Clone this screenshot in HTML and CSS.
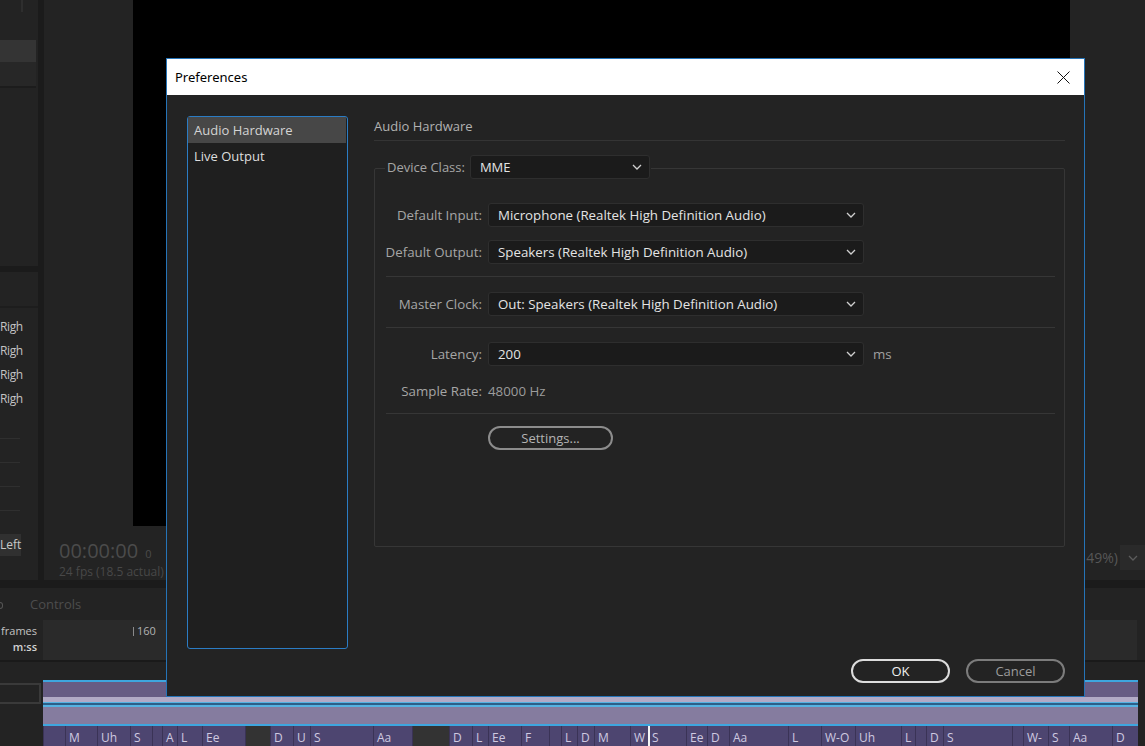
FILE: index.html
```html
<!DOCTYPE html>
<html lang="en">
<head>
<meta charset="UTF-8" />
<title>Preferences</title>
<link rel="stylesheet" href="styles.css">
</head>
<body>
<div class="app">
    <div class="top">
        <div class="side">
            <div class="side-upper">
                <div class="side-tick"></div>
                <div class="side-band"></div>
                <div class="side-row-dim"></div>
            </div>
            <div class="side-lower">
                <div class="side-head"></div>
                <div class="side-item">Righ</div>
                <div class="side-item">Righ</div>
                <div class="side-item">Righ</div>
                <div class="side-item">Righ</div>
                <div class="side-rules">
                    <div class="side-rule"></div>
                    <div class="side-rule"></div>
                    <div class="side-rule"></div>
                    <div class="side-rule"></div>
                </div>
                <div class="side-btn">Left</div>
            </div>
        </div>
        <div class="monitor">
            <div class="monitor-view"><div class="video"></div></div>
            <div class="monitor-foot">
                <div class="timecode-block">
                    <div class="timecode">00:00:00 <span class="tc-small">0</span></div>
                    <div class="fps">24 fps (18.5 actual)</div>
                </div>
                <div class="zoom-block">
                    <span class="zoom-val">49%)</span>
                    <span class="zoom-drop">
                        <svg width="10" height="6" viewBox="0 0 10 6"><path d="M1 1l4 4 4-4" fill="none" stroke="#5c5c5c" stroke-width="1.3"/></svg>
                    </span>
                </div>
            </div>
        </div>
    </div>

    <div class="bottom">
        <div class="tabs">
            <span class="tab-cut"></span>
            <span class="tab">Controls</span>
        </div>
        <div class="ruler-row">
            <div class="units">
                <div>frames</div>
                <div class="units-strong">m:ss</div>
            </div>
            <div class="ruler"><span class="tick"></span><span class="tick-label">160</span></div>
        </div>
        <div class="ruler-gap"></div>
        <div class="timeline">
            <div class="track-head"><div class="track-box"></div></div>
            <div class="track">
                <div class="t-line"></div>
                <div class="t-a"></div>
                <div class="t-b"></div>
                <div class="t-line thin"></div>
                <div class="t-dark"></div>
                <div class="t-line thin"></div>
                <div class="t-c"></div>
                <div class="t-line"></div>
                <div class="phonemes">
                    <div class="ph" style="width:22px"></div>
                    <div class="ph" style="width:32px">M</div>
                    <div class="ph" style="width:33px">Uh</div>
                    <div class="ph" style="width:22px">S</div>
                    <div class="ph" style="width:10px"></div>
                    <div class="ph" style="width:15px">A</div>
                    <div class="ph" style="width:25px">L</div>
                    <div class="ph" style="width:43px">Ee</div>
                    <div class="ph gap" style="width:25px"></div>
                    <div class="ph" style="width:23px">D</div>
                    <div class="ph" style="width:17px">U</div>
                    <div class="ph" style="width:63px">S</div>
                    <div class="ph" style="width:39px">Aa</div>
                    <div class="ph gap" style="width:37px"></div>
                    <div class="ph" style="width:23px">D</div>
                    <div class="ph" style="width:16px">L</div>
                    <div class="ph" style="width:33px">Ee</div>
                    <div class="ph" style="width:28px">F</div>
                    <div class="ph" style="width:12px"></div>
                    <div class="ph" style="width:16px">L</div>
                    <div class="ph" style="width:17px">D</div>
                    <div class="ph" style="width:36px">M</div>
                    <div class="ph" style="width:18px">W</div>
                    <div class="playhead"></div>
                    <div class="ph nobar" style="width:36px">S</div>
                    <div class="ph" style="width:21px">Ee</div>
                    <div class="ph" style="width:22px">D</div>
                    <div class="ph" style="width:59px">Aa</div>
                    <div class="ph" style="width:33px">L</div>
                    <div class="ph" style="width:34px">W-O</div>
                    <div class="ph" style="width:46px">Uh</div>
                    <div class="ph" style="width:14px">L</div>
                    <div class="ph" style="width:11px"></div>
                    <div class="ph" style="width:17px">D</div>
                    <div class="ph" style="width:69px">S</div>
                    <div class="ph" style="width:11px"></div>
                    <div class="ph" style="width:25px">W-</div>
                    <div class="ph" style="width:21px">S</div>
                    <div class="ph" style="width:43px">Aa</div>
                    <div class="ph" style="width:26px">D</div>
                </div>
            </div>
        </div>
    </div>
</div>

<!-- modal preferences dialog -->
<div class="dialog">
    <div class="titlebar">
        <span>Preferences</span>
        <svg class="close" width="13" height="13" viewBox="0 0 13 13"><path d="M0.5 0.5l12 12M12.5 0.5l-12 12" stroke="#111" stroke-width="1"/></svg>
    </div>
    <div class="dialog-body">
        <div class="main">
            <div class="cat-list">
                <div class="cat-item selected">Audio Hardware</div>
                <div class="cat-item">Live Output</div>
            </div>
            <div class="panel">
                <div class="panel-title">Audio Hardware</div>
                <div class="group">
                    <div class="group-head">
                        <span class="label">Device Class:</span>
                        <div class="select narrow">
                            <span>MME</span>
                            <svg width="10" height="6" viewBox="0 0 10 6"><path d="M1 1l4 4 4-4" fill="none" stroke="#d0d0d0" stroke-width="1.3"/></svg>
                        </div>
                    </div>

                    <div class="row first">
                        <span class="row-label">Default Input:</span>
                        <div class="select">
                            <span>Microphone (Realtek High Definition Audio)</span>
                            <svg width="10" height="6" viewBox="0 0 10 6"><path d="M1 1l4 4 4-4" fill="none" stroke="#d0d0d0" stroke-width="1.3"/></svg>
                        </div>
                    </div>
                    <div class="row near">
                        <span class="row-label">Default Output:</span>
                        <div class="select">
                            <span>Speakers (Realtek High Definition Audio)</span>
                            <svg width="10" height="6" viewBox="0 0 10 6"><path d="M1 1l4 4 4-4" fill="none" stroke="#d0d0d0" stroke-width="1.3"/></svg>
                        </div>
                    </div>
                    <div class="sep s1"></div>
                    <div class="row after-sep">
                        <span class="row-label">Master Clock:</span>
                        <div class="select">
                            <span>Out: Speakers (Realtek High Definition Audio)</span>
                            <svg width="10" height="6" viewBox="0 0 10 6"><path d="M1 1l4 4 4-4" fill="none" stroke="#d0d0d0" stroke-width="1.3"/></svg>
                        </div>
                    </div>
                    <div class="sep s2"></div>
                    <div class="row latency">
                        <span class="row-label">Latency:</span>
                        <div class="select">
                            <span>200</span>
                            <svg width="10" height="6" viewBox="0 0 10 6"><path d="M1 1l4 4 4-4" fill="none" stroke="#d0d0d0" stroke-width="1.3"/></svg>
                        </div>
                        <span class="unit">ms</span>
                    </div>
                    <div class="row near">
                        <span class="row-label">Sample Rate:</span>
                        <span class="value">48000 Hz</span>
                    </div>
                    <div class="sep s3"></div>
                    <div class="row settings-row">
                        <span class="row-label"></span>
                        <button class="pill settings">Settings...</button>
                    </div>
                </div>
            </div>
        </div>
        <div class="footer">
            <button class="pill ok">OK</button>
            <button class="pill cancel">Cancel</button>
        </div>
    </div>
</div>
</body>
</html>
```

FILE: styles.css
```css
body {
    margin: 0;
    width: 1145px;
    height: 746px;
    overflow: hidden;
    position: relative;
    background-color: #1b1b1b;
    font-family: "Open Sans", "Noto Sans", sans-serif;
    font-size: 13px;
}

.app {
    display: flex;
    flex-direction: column;
    gap: 8px;
    height: 746px;
}

/* top half: side panels + program monitor */
.top {
    display: flex;
    gap: 6px;
    height: 580px;
}
.side {
    width: 38px;
    display: flex;
    flex-direction: column;
    gap: 6px;
}
.side-upper {
    height: 266px;
    background-color: #232323;
}
.side-tick {
    width: 2px;
    height: 12px;
    margin-left: 21px;
    background-color: #2e2e2e;
}
.side-band {
    height: 22px;
    margin-top: 28px;
    margin-right: 2px;
    background-color: #343434;
}
.side-row-dim {
    height: 24px;
    margin-right: 2px;
    background-color: #272727;
    border-bottom: 2px solid #1c1c1c;
}
.side-lower {
    flex: 1;
    background-color: #232323;
}
.side-head {
    height: 34px;
    border-bottom: 2px solid #1d1d1d;
    margin-bottom: 7px;
}
.side-item {
    height: 24px;
    line-height: 24px;
    font-size: 12px;
    letter-spacing: -0.4px;
    white-space: nowrap;
    color: #c4c4c4;
}
.side-rules {
    padding-top: 27px;
}
.side-rule {
    width: 20px;
    height: 1px;
    margin-bottom: 23px;
    background-color: #2f2f2f;
}
.side-btn {
    width: 21px;
    height: 22px;
    margin-top: 1px;
    line-height: 22px;
    font-size: 12px;
    white-space: nowrap;
    background-color: #303030;
    color: #c8c8c8;
}

.monitor {
    flex: 1;
    display: flex;
    flex-direction: column;
    background-color: #232323;
}
.monitor-view {
    height: 528px;
    padding: 0 75px 0 89px;
}
.video {
    height: 100%;
    background-color: #000;
}
.monitor-foot {
    flex: 1;
    display: flex;
    justify-content: space-between;
    padding-left: 15px;
}
.timecode-block {
    padding-top: 13px;
}
.timecode {
    font-size: 20px;
    line-height: 24px;
    color: #4b4b4b;
}
.tc-small {
    font-size: 11px;
    margin-left: 2px;
}
.fps {
    font-size: 12px;
    line-height: 16px;
    margin-top: -2px;
    color: #484848;
}
.zoom-block {
    display: flex;
    align-items: center;
    gap: 2px;
    margin-top: 19px;
    height: 25px;
}
.zoom-val {
    font-size: 14px;
    color: #575757;
}
.zoom-drop {
    width: 25px;
    height: 25px;
    display: flex;
    align-items: center;
    justify-content: center;
    background-color: #2a2a2a;
}

/* bottom half: lip sync timeline */
.bottom {
    flex: 1;
    display: flex;
    flex-direction: column;
    background-color: #232323;
}
.tabs {
    height: 32px;
    display: flex;
    align-items: center;
}
.tab-cut {
    width: 3px;
    height: 7px;
    margin-top: 2px;
    border-radius: 0 3px 3px 0;
    border: 1px solid #555;
    border-left: none;
    box-sizing: border-box;
}
.tab {
    margin-left: 27px;
    color: #4d4d4d;
}
.ruler-row {
    height: 40px;
    display: flex;
}
.units {
    width: 37px;
    padding-right: 6px;
    padding-top: 3px;
    text-align: right;
    font-size: 11px;
    line-height: 16px;
    color: #c2c2c2;
}
.units-strong {
    color: #d2d2d2;
    font-weight: 600;
}
.ruler {
    width: 1094px;
    background-color: #2a2a2a;
    display: flex;
    align-items: flex-start;
    padding-left: 90px;
    box-sizing: border-box;
}
.tick {
    width: 1px;
    height: 9px;
    margin-top: 7px;
    background-color: #8a8a8a;
}
.tick-label {
    margin-left: 3px;
    margin-top: 3px;
    font-size: 11px;
    color: #b2b2b2;
}
.ruler-gap {
    height: 18px;
    border-top: 2px solid #1a1a1a;
}
.timeline {
    height: 66px;
    display: flex;
}
.track-head {
    width: 43px;
    padding-top: 3px;
}
.track-box {
    width: 39px;
    height: 17px;
    border: 2px solid #3a3a3a;
    border-left: none;
}
.track {
    width: 1095px;
    display: flex;
    flex-direction: column;
}
.t-line {
    height: 2px;
    background-color: #3ea6df;
}
.t-line.thin {
    background-color: #55b2e2;
}
.t-a {
    height: 15px;
    background-color: #675c84;
}
.t-b {
    height: 5px;
    background-color: #b2aac6;
}
.t-dark {
    height: 2px;
    background-color: #2d5f88;
}
.t-c {
    height: 17px;
    background-color: #857c9f;
}
.phonemes {
    height: 20px;
    display: flex;
    background-color: #4d4570;
}
.ph {
    box-sizing: border-box;
    border-left: 1px solid #3a3356;
    padding: 2px 0 0 3px;
    font-size: 12px;
    line-height: 20px;
    color: #cfcae0;
    overflow: hidden;
    white-space: nowrap;
}
.ph.nobar {
    border-left: none;
    padding-left: 2px;
}
.ph.gap {
    background-color: #333333;
}
.playhead {
    width: 2px;
    background-color: #f4f4f4;
}

/* preferences dialog */
.dialog {
    position: absolute;
    left: 166px;
    top: 58px;
    width: 919px;
    height: 639px;
    box-sizing: border-box;
    border: 1px solid #2574b8;
    background-color: #232323;
    display: flex;
    flex-direction: column;
}
.titlebar {
    height: 36px;
    background-color: #fff;
    display: flex;
    align-items: center;
    justify-content: space-between;
    padding: 0 14px 0 8px;
    font-family: "Noto Sans", sans-serif;
    font-size: 13px;
    color: #000;
}
.dialog-body {
    flex: 1;
    display: flex;
    flex-direction: column;
    padding: 21px 19px 13px 20px;
}
.main {
    display: flex;
    gap: 26px;
    height: 533px;
}
.cat-list {
    width: 161px;
    box-sizing: border-box;
    border: 1px solid #2b7cc4;
    border-radius: 3px;
    background-color: #1f1f1f;
}
.cat-item {
    height: 26px;
    line-height: 26px;
    padding-left: 6px;
    margin-right: 1px;
    color: #dedede;
}
.cat-item.selected {
    background-color: #474747;
    color: #d4d4d4;
}
.panel {
    flex: 1;
    font-size: 13.3px;
}
.panel-title {
    font-size: 13px;
    line-height: 20px;
    padding-bottom: 4px;
    border-bottom: 1px solid #343434;
    color: #b2b2b2;
}
.group {
    margin-top: 27px;
    height: 379px;
    box-sizing: border-box;
    border: 1px solid #363636;
    border-radius: 2px;
}
.group-head {
    display: flex;
    align-items: center;
    gap: 5px;
    width: max-content;
    height: 24px;
    margin: -14px 0 0 10px;
    padding: 0 1px 0 2px;
    font-size: 13px;
    background-color: #232323;
}
.label,
.row-label {
    color: #a6a6a6;
}
.select {
    width: 376px;
    height: 24px;
    box-sizing: border-box;
    display: flex;
    align-items: center;
    justify-content: space-between;
    padding: 0 7px 0 9px;
    background-color: #1b1b1b;
    border: 1px solid #2e2e2e;
    border-radius: 3px;
    color: #e4e4e4;
}
.select.narrow {
    width: 180px;
}
.row {
    display: flex;
    align-items: center;
    height: 24px;
    padding-left: 8px;
}
.row-label {
    width: 99px;
    margin-right: 6px;
    text-align: right;
    white-space: nowrap;
}
.row.first {
    margin-top: 24px;
}
.row.near {
    margin-top: 13px;
}
.row.after-sep {
    margin-top: 15px;
}
.row.latency {
    margin-top: 14px;
}
.row.settings-row {
    margin-top: 12px;
}
.unit {
    margin-left: 9px;
    color: #a0a0a0;
}
.value {
    color: #9c9c9c;
}
.sep {
    height: 1px;
    margin: 0 9px 0 11px;
    background-color: #363636;
}
.sep.s1 {
    margin-top: 12px;
}
.sep.s2 {
    margin-top: 11px;
}
.sep.s3 {
    margin-top: 10px;
}
.pill {
    height: 24px;
    box-sizing: border-box;
    border-radius: 12px;
    background: transparent;
    font-family: "Open Sans", "Noto Sans", sans-serif;
    font-size: 13px;
    padding: 0;
}
.settings {
    width: 125px;
    border: 2px solid #8c8c8c;
    color: #b4b4b4;
}
.footer {
    display: flex;
    justify-content: flex-end;
    gap: 16px;
    margin-top: 10px;
}
.ok,
.cancel {
    width: 99px;
}
.ok {
    border: 2px solid #dcdcdc;
    color: #f0f0f0;
}
.cancel {
    border: 2px solid #7c7c7c;
    color: #9c9c9c;
}
```
